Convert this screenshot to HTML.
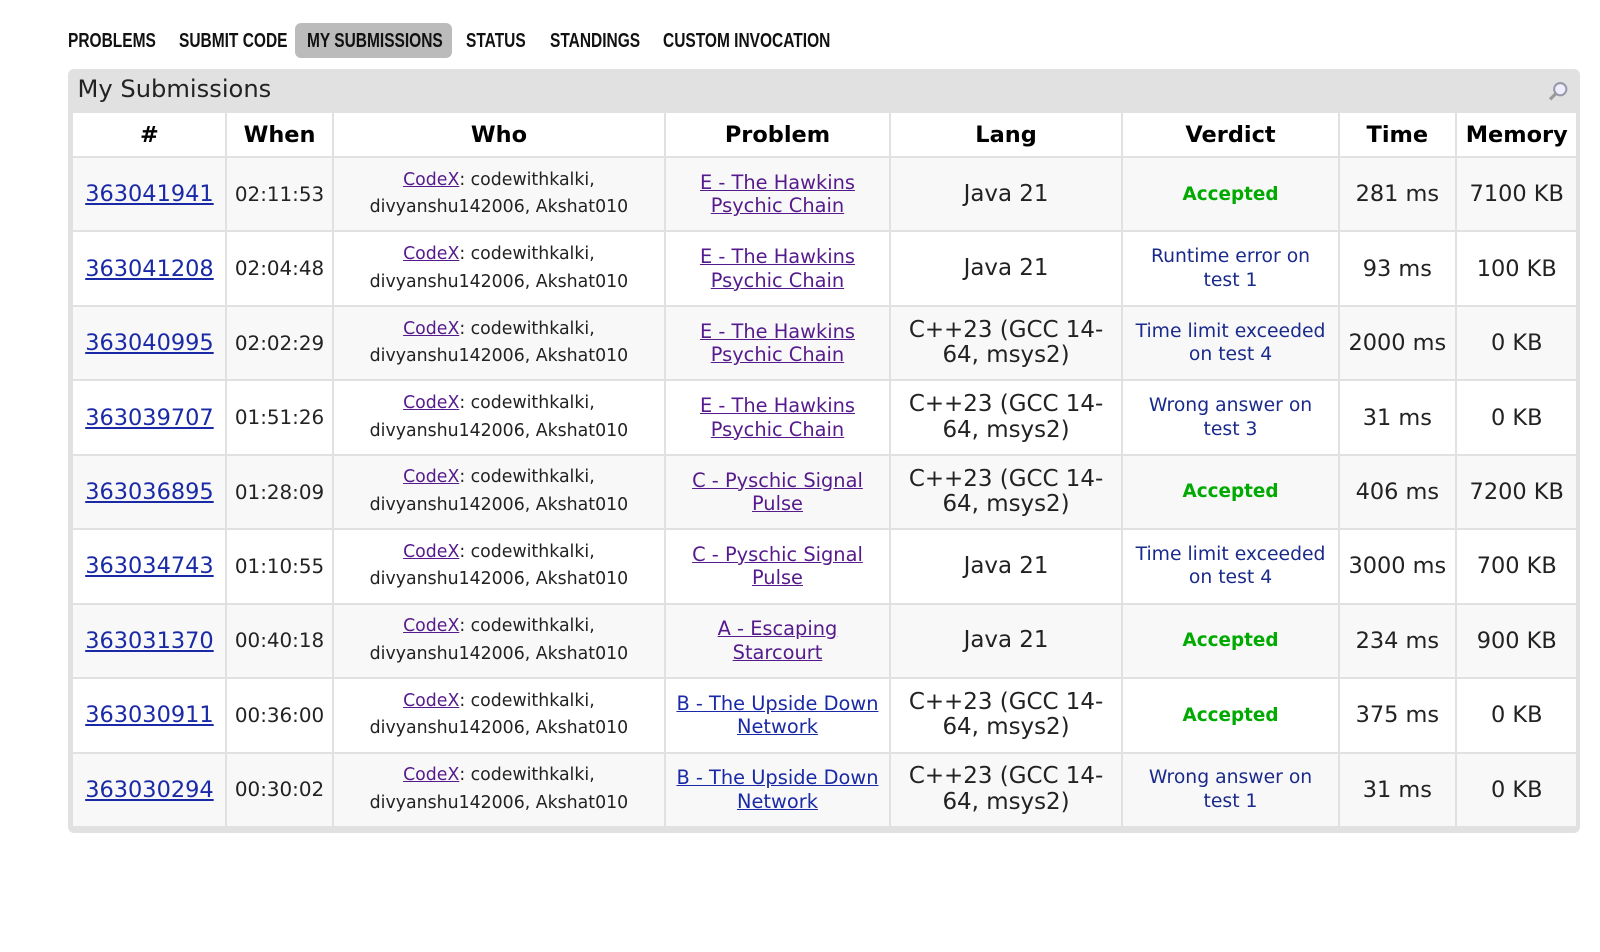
<!DOCTYPE html>
<html><head><meta charset="utf-8"><style>
body{margin:0;background:#fff;font-family:"DejaVu Sans","Liberation Sans",sans-serif;width:1600px;height:952px;overflow:hidden;position:relative}
.wrap{zoom:1.0204;position:relative;width:1568px;height:933px}
.nav{position:absolute;top:23px;left:0;height:34px;width:900px;font-family:"Liberation Sans Narrow","Liberation Sans",sans-serif;font-weight:bold;font-size:20px;color:#111}
.nav span{position:absolute;display:block;line-height:36px;top:0;transform:scaleX(.76);transform-origin:0 0;white-space:nowrap}
.nav .bg{position:absolute;left:289px;top:0;width:154px;height:34px;background:#bbb;border-radius:6px}
.box{position:absolute;left:67px;top:68px;width:1481px;height:748px;background:#e1e1e1;border-radius:6px}
.title{position:absolute;left:9px;top:6px;font-size:23.7px;color:#222}
.mag{position:absolute;right:10px;top:10px}
table{position:absolute;left:3px;top:41px;border-collapse:collapse;width:1475px;table-layout:fixed}
td,th{border:2px solid #e1e1e1;text-align:center;vertical-align:middle;padding:0}
th{height:42px;font-size:22px;font-weight:bold;background:#fff}
td{height:71px}
tr:nth-child(even) td{background:#f8f8f8}
tr:nth-child(odd) td{background:#fff}
.id a{color:#1a2aa6;font-size:22px;text-decoration:underline}
.when{font-size:19.5px;color:#222}
.who{font-size:17px;line-height:27px;color:#222}
.who a{color:#551a8b;text-decoration:underline}
.pr{font-size:19px;line-height:23px}
.pr a{color:#551a8b;text-decoration:underline}.pr a.b{color:#1a2aa6}
.lang{font-size:22.5px;line-height:25px;color:#222}
.v{font-size:18.4px;line-height:23px;color:#1a2a8a}
.ok{color:#0a0;font-weight:bold;font-size:18px}
.tm{font-size:22px;color:#222}
</style></head><body><div class="wrap">
<div class="nav"><div class="bg"></div><span style="left:67px">PROBLEMS</span><span style="left:175px">SUBMIT CODE</span><span style="left:301px">MY SUBMISSIONS</span><span style="left:457px">STATUS</span><span style="left:539px">STANDINGS</span><span style="left:650px">CUSTOM INVOCATION</span></div>
<div class="box"><div class="title">My Submissions</div>
<svg class="mag" width="22" height="22" viewBox="0 0 22 22"><circle cx="13" cy="9" r="6" fill="#eef" stroke="#99a" stroke-width="2"/><path d="M9 13 L3 19" stroke="#999" stroke-width="3"/></svg>
<table>
<colgroup><col style="width:151px"><col style="width:104px"><col style="width:326px"><col style="width:220px"><col style="width:228px"><col style="width:212px"><col style="width:115px"><col style="width:119px"></colgroup>
<tr><th>#</th><th>When</th><th>Who</th><th>Problem</th><th>Lang</th><th>Verdict</th><th>Time</th><th>Memory</th></tr>
<tr><td class="id"><a>363041941</a></td><td class="when">02:11:53</td><td class="who"><a>CodeX</a>: codewithkalki,<br>divyanshu142006, Akshat010</td><td class="pr"><a>E - The Hawkins<br>Psychic Chain</a></td><td class="lang">Java 21</td><td class="v ok">Accepted</td><td class="tm">281 ms</td><td class="tm">7100 KB</td></tr>
<tr><td class="id"><a>363041208</a></td><td class="when">02:04:48</td><td class="who"><a>CodeX</a>: codewithkalki,<br>divyanshu142006, Akshat010</td><td class="pr"><a>E - The Hawkins<br>Psychic Chain</a></td><td class="lang">Java 21</td><td class="v">Runtime error on<br>test 1</td><td class="tm">93 ms</td><td class="tm">100 KB</td></tr>
<tr><td class="id"><a>363040995</a></td><td class="when">02:02:29</td><td class="who"><a>CodeX</a>: codewithkalki,<br>divyanshu142006, Akshat010</td><td class="pr"><a>E - The Hawkins<br>Psychic Chain</a></td><td class="lang">C++23 (GCC 14-<br>64, msys2)</td><td class="v">Time limit exceeded<br>on test 4</td><td class="tm">2000 ms</td><td class="tm">0 KB</td></tr>
<tr><td class="id"><a>363039707</a></td><td class="when">01:51:26</td><td class="who"><a>CodeX</a>: codewithkalki,<br>divyanshu142006, Akshat010</td><td class="pr"><a>E - The Hawkins<br>Psychic Chain</a></td><td class="lang">C++23 (GCC 14-<br>64, msys2)</td><td class="v">Wrong answer on<br>test 3</td><td class="tm">31 ms</td><td class="tm">0 KB</td></tr>
<tr><td class="id"><a>363036895</a></td><td class="when">01:28:09</td><td class="who"><a>CodeX</a>: codewithkalki,<br>divyanshu142006, Akshat010</td><td class="pr"><a>C - Pyschic Signal<br>Pulse</a></td><td class="lang">C++23 (GCC 14-<br>64, msys2)</td><td class="v ok">Accepted</td><td class="tm">406 ms</td><td class="tm">7200 KB</td></tr>
<tr><td class="id"><a>363034743</a></td><td class="when">01:10:55</td><td class="who"><a>CodeX</a>: codewithkalki,<br>divyanshu142006, Akshat010</td><td class="pr"><a>C - Pyschic Signal<br>Pulse</a></td><td class="lang">Java 21</td><td class="v">Time limit exceeded<br>on test 4</td><td class="tm">3000 ms</td><td class="tm">700 KB</td></tr>
<tr><td class="id"><a>363031370</a></td><td class="when">00:40:18</td><td class="who"><a>CodeX</a>: codewithkalki,<br>divyanshu142006, Akshat010</td><td class="pr"><a>A - Escaping<br>Starcourt</a></td><td class="lang">Java 21</td><td class="v ok">Accepted</td><td class="tm">234 ms</td><td class="tm">900 KB</td></tr>
<tr><td class="id"><a>363030911</a></td><td class="when">00:36:00</td><td class="who"><a>CodeX</a>: codewithkalki,<br>divyanshu142006, Akshat010</td><td class="pr"><a class="b">B - The Upside Down<br>Network</a></td><td class="lang">C++23 (GCC 14-<br>64, msys2)</td><td class="v ok">Accepted</td><td class="tm">375 ms</td><td class="tm">0 KB</td></tr>
<tr><td class="id"><a>363030294</a></td><td class="when">00:30:02</td><td class="who"><a>CodeX</a>: codewithkalki,<br>divyanshu142006, Akshat010</td><td class="pr"><a class="b">B - The Upside Down<br>Network</a></td><td class="lang">C++23 (GCC 14-<br>64, msys2)</td><td class="v">Wrong answer on<br>test 1</td><td class="tm">31 ms</td><td class="tm">0 KB</td></tr>
</table></div>
</div></body></html>
